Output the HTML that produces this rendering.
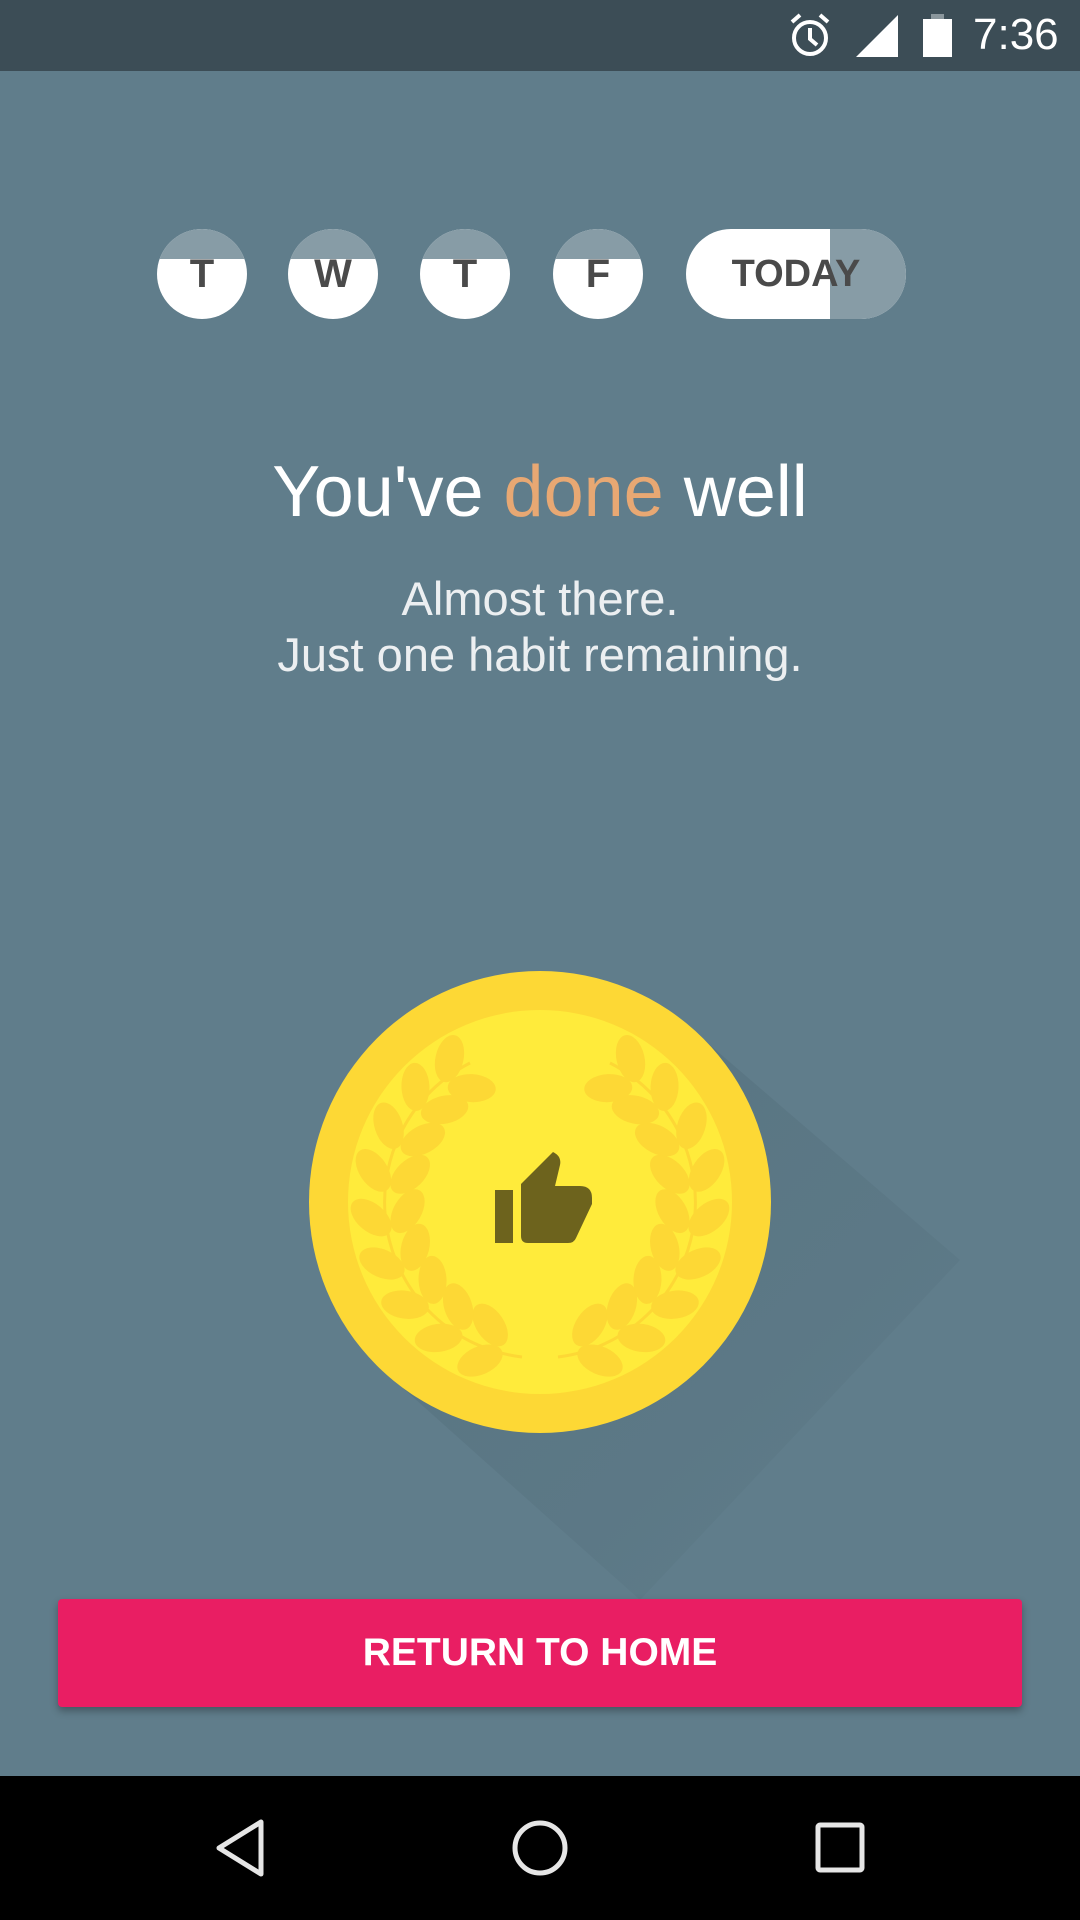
<!DOCTYPE html>
<html><head><meta charset="utf-8">
<style>
*{margin:0;padding:0;box-sizing:border-box}
html,body{width:1080px;height:1920px;overflow:hidden;background:#607d8b;font-family:"Liberation Sans",sans-serif}
.status{position:absolute;left:0;top:0;width:1080px;height:71px;background:#3c4d56}
.time{position:absolute;left:973px;top:10px;font-size:44px;color:#fff;line-height:50px}
.day{position:absolute;top:229px;width:90px;height:90px;border-radius:45px;overflow:hidden;background:#fff;color:#4a4a4a;font-weight:bold;font-size:40px;text-align:center;line-height:90px}
.day .top{position:absolute;left:0;top:0;width:100%;height:30px;background:#879ca6}
.day span{position:relative}
.today{position:absolute;left:686px;top:229px;width:220px;height:90px;border-radius:45px;overflow:hidden;background:#fff}
.today .g{position:absolute;left:144px;top:0;width:76px;height:90px;background:#879ca6}
.today span{position:absolute;left:40px;width:140px;text-align:center;line-height:90px;font-size:38px;font-weight:bold;color:#4a4a4a}
.title{position:absolute;left:0;width:1080px;top:452px;text-align:center;font-size:72px;color:#fff;line-height:80px}
.sub{position:absolute;left:0;width:1080px;top:571px;text-align:center;font-size:47px;color:#eceff1;line-height:56px}
.btn{position:absolute;left:58px;top:1599px;width:964px;height:108px;background:#e91e63;border-radius:4px;box-shadow:0 4px 8px rgba(0,0,0,.3);color:#fff;font-size:39px;font-weight:bold;text-align:center;line-height:108px}
.nav{position:absolute;left:0;top:1776px;width:1080px;height:144px;background:#000}
</style></head><body>
<div class="status">
<svg width="1080" height="71" style="position:absolute;left:0;top:0">
<g fill="none" stroke="#fff" stroke-width="4"><circle cx="810" cy="38" r="16"/><path d="M810 28v11l7 6"/><path d="M792 22l8-7M828 22l-8-7"/></g>
<polygon points="898,15 898,57 856,57" fill="#fff"/>
<rect x="931" y="14" width="13" height="5" fill="#8a969c"/>
<rect x="923" y="19" width="29" height="38" fill="#fff"/>
</svg>
<div class="time">7:36</div>
</div>

<div class="day" style="left:157px"><div class="top"></div><span>T</span></div>
<div class="day" style="left:288px"><div class="top"></div><span>W</span></div>
<div class="day" style="left:420px"><div class="top"></div><span>T</span></div>
<div class="day" style="left:553px"><div class="top"></div><span>F</span></div>
<div class="today"><div class="g"></div><span>TODAY</span></div>

<div class="title">You've <span style="color:#e8a873">done</span> well</div>
<div class="sub">Almost there.<br>Just one habit remaining.</div>

<svg width="1080" height="1920" style="position:absolute;left:0;top:0">
<defs>
<linearGradient id="sh" x1="0" y1="0" x2="1" y2="1">
<stop offset="0" stop-color="#4a6470" stop-opacity="0.35"/>
<stop offset="0.6" stop-color="#4a6470" stop-opacity="0.2"/>
<stop offset="1" stop-color="#4a6470" stop-opacity="0"/>
</linearGradient>
</defs>
<polygon points="703,1039 960,1260 640,1600 377,1365" fill="url(#sh)"/>
<circle cx="540" cy="1202" r="231" fill="#fdd835"/>
<circle cx="540" cy="1202" r="192" fill="#ffeb3b"/>
<defs>
<g id="lf">
<ellipse cx="709" cy="1216" rx="14" ry="24" transform="rotate(-40 709 1216)" fill="#fdd835"/>
<ellipse cx="672" cy="1216" rx="14" ry="24" transform="rotate(40 672 1216)" fill="#fdd835"/>
</g>
<g id="br">
<path d="M522 1357 A156 156 0 0 1 470 1063" fill="none" stroke="#fdd835" stroke-width="3"/>
<use href="#lf" transform="rotate(106 540 1202)"/>
<use href="#lf" transform="rotate(122 540 1202)"/>
<use href="#lf" transform="rotate(138 540 1202)"/>
<use href="#lf" transform="rotate(154 540 1202)"/>
<use href="#lf" transform="rotate(170 540 1202)"/>
<use href="#lf" transform="rotate(186 540 1202)"/>
<use href="#lf" transform="rotate(202 540 1202)"/>
<use href="#lf" transform="rotate(218 540 1202)"/>
<use href="#lf" transform="rotate(233 540 1202)"/>
</g>
</defs>
<use href="#br"/>
<use href="#br" transform="translate(1080 0) scale(-1 1)"/>
<rect x="495" y="1190" width="18" height="53" fill="#6d631d"/>
<path d="M521 1184 L553 1152 Q557 1154 559 1157 Q561 1161 560 1165 L555 1186 L580 1186 Q592 1186 592 1198 L592 1204 L576 1238 Q574 1243 568 1243 L528 1243 Q521 1243 521 1236 Z" fill="#6d631d"/>
</svg>

<div class="btn">RETURN TO HOME</div>

<div class="nav">
<svg width="1080" height="144" style="position:absolute;left:0;top:0">
<g fill="none" stroke="#e6e6e6" stroke-width="5" stroke-linejoin="round">
<path d="M261 46 L219 72 L261 98 Z"/>
<circle cx="540" cy="72" r="25"/>
<rect x="818" y="49" width="44" height="45" rx="2"/>
</g>
</svg>
</div>
</body></html>
